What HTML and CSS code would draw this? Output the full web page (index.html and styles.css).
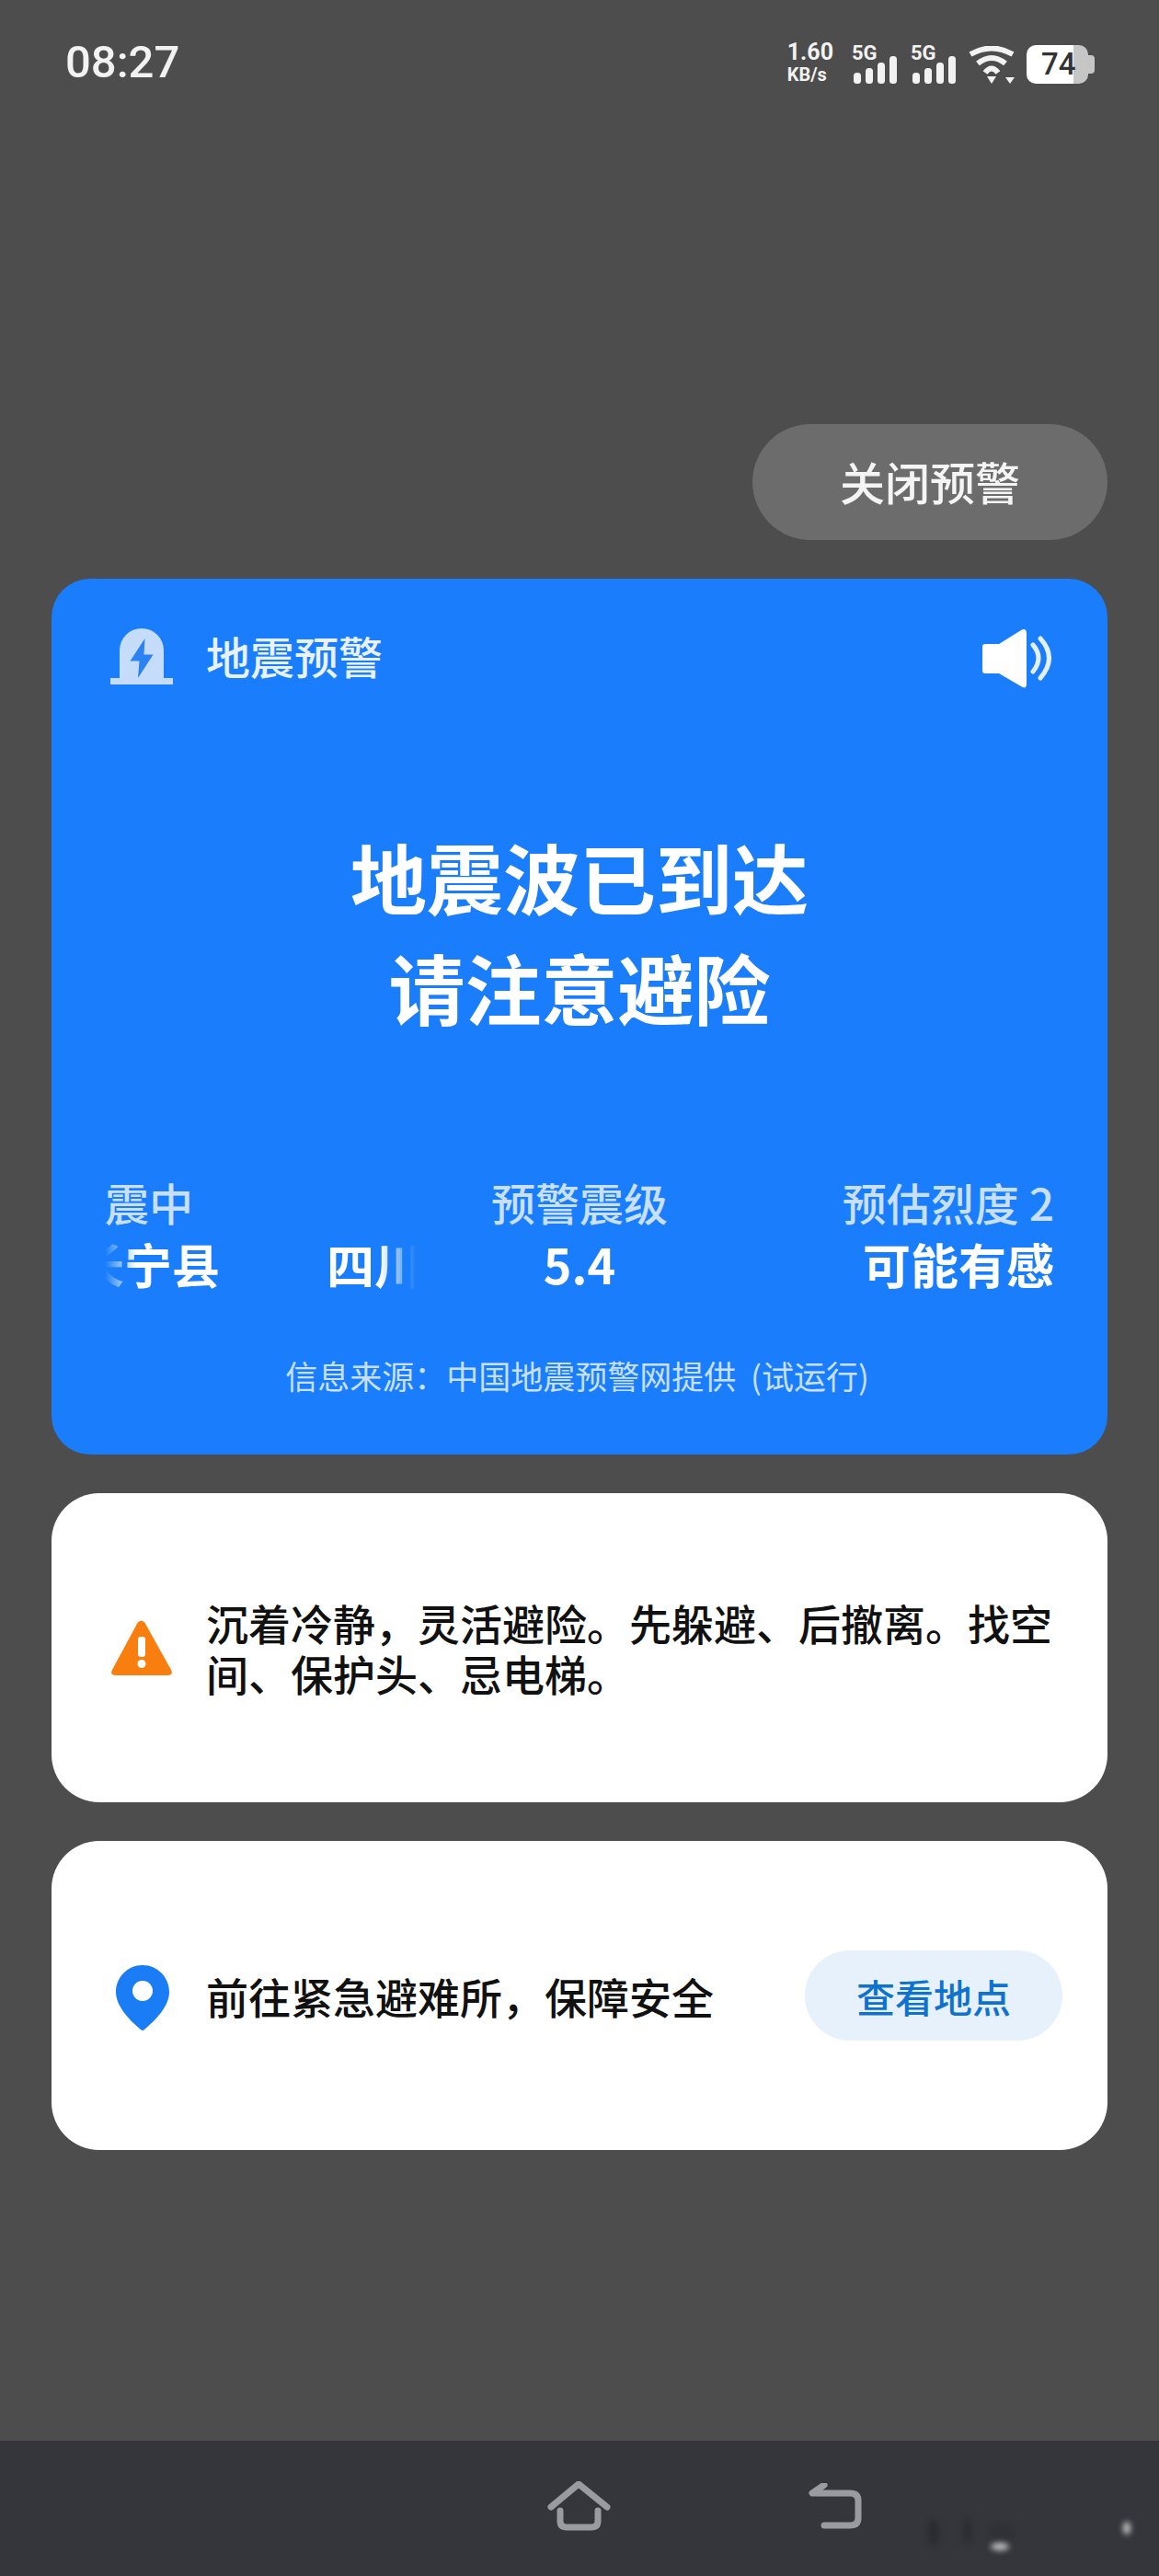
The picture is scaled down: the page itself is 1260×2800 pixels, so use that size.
FILE: index.html
```html
<!DOCTYPE html>
<html lang="zh-CN">
<head>
    <meta charset="UTF-8">
    <meta name="viewport" content="width=device-width, initial-scale=1.0">
    <title>地震预警</title>
    <link rel="stylesheet" href="styles.css">
</head>
<body>
    <div class="status-bar">
        <span class="time">08:27</span>
        <div class="status-icons">
            <div class="net-speed">
                <span class="speed-value">1.60</span>
                <span class="speed-unit">KB/s</span>
            </div>
            <div class="signal">
                <span class="signal-label">5G</span>
                <svg class="signal-bars" viewBox="0 0 48 30" width="48" height="30">
                    <rect x="0" y="18" width="8" height="12" rx="3.5"/>
                    <rect x="13" y="13" width="8" height="17" rx="3.5"/>
                    <rect x="26" y="7" width="8" height="23" rx="3.5"/>
                    <rect x="39" y="0" width="8" height="30" rx="3.5"/>
                </svg>
            </div>
            <div class="signal">
                <span class="signal-label">5G</span>
                <svg class="signal-bars" viewBox="0 0 48 30" width="48" height="30">
                    <rect x="0" y="18" width="8" height="12" rx="3.5"/>
                    <rect x="13" y="13" width="8" height="17" rx="3.5"/>
                    <rect x="26" y="7" width="8" height="23" rx="3.5"/>
                    <rect x="39" y="0" width="8" height="30" rx="3.5"/>
                </svg>
            </div>
            <svg class="wifi" viewBox="0 0 50 41" width="50" height="41">
                <path d="M2 9Q25 -4 48 9M10 19Q25 7 40 19M18 29Q25 20 32 29" fill="none" stroke="#f2f2f2" stroke-width="6"/>
                <path d="M20 33H30L25 41ZM40 34H50L45 41Z" fill="#f2f2f2"/>
            </svg>
            <div class="battery">
                <div class="battery-body"><span class="battery-level">74</span></div>
                <div class="battery-nub"></div>
            </div>
        </div>
    </div>

    <main class="content">
        <button class="close-alert">关闭预警</button>

        <section class="alert-card">
            <div class="alert-header">
                <svg class="alert-icon" viewBox="0 0 68 62" width="68" height="62">
                    <path d="M10 55V24a24 24 0 0 1 48 0V55Z" fill="#c6dcfb"/>
                    <rect x="0" y="54" width="68" height="7" fill="#c6dcfb"/>
                    <path d="M37.5 11L21.5 35.5H31.5L30 54L46.5 28.5H36.5Z" fill="#2a82f4"/>
                </svg>
                <span class="alert-name">地震预警</span>
                <svg class="sound-icon" viewBox="0 0 76 70" width="76" height="70">
                    <path d="M3 18H18L42 3Q48 0 48 7V61Q48 68 42 64L18 50H3Q0 50 0 47V21Q0 18 3 18Z" fill="#fff"/>
                    <path d="M55 19Q67 33 55 48M63 12Q82 33 63 55" fill="none" stroke="#e4f0ff" stroke-width="5" stroke-linecap="round"/>
                </svg>
            </div>

            <h1 class="alert-title">地震波已到达<br>请注意避险</h1>

            <div class="alert-stats">
                <div class="stat">
                    <div class="stat-label">震中</div>
                    <div class="stat-scroll"><span class="stat-scroll-text">长宁县<span class="stat-scroll-gap"></span>四川</span></div>
                </div>
                <div class="stat stat-center">
                    <div class="stat-label">预警震级</div>
                    <div class="stat-value">5.4</div>
                </div>
                <div class="stat stat-right">
                    <div class="stat-label">预估烈度 2</div>
                    <div class="stat-value">可能有感</div>
                </div>
            </div>

            <p class="alert-source">信息来源：中国地震预警网提供 (试运行)</p>
        </section>

        <section class="tip-card">
            <svg class="tip-icon" viewBox="0 0 68 62" width="68" height="62">
                <path d="M29.5 4Q33.5 -1 37.5 4L66 55Q69 61 62 61H6Q-1 61 2 55Z" fill="#f97e10"/>
                <rect x="30" y="19" width="8" height="22" rx="3" fill="#fff"/>
                <circle cx="34" cy="48.5" r="4.5" fill="#fff"/>
            </svg>
            <p class="tip-text">沉着冷静，灵活避险。先躲避、后撤离。找空间、保护头、忌电梯。</p>
        </section>

        <section class="tip-card">
            <svg class="pin-icon" viewBox="0 0 58 72" width="58" height="72">
                <path d="M29 0C13 0 0 13 0 29C0 45 15 60 27 70Q29 72 31 70C43 60 58 45 58 29C58 13 45 0 29 0Z" fill="#1a7df5"/>
                <circle cx="29" cy="28" r="11" fill="#fff"/>
            </svg>
            <p class="tip-text tip-text-grow">前往紧急避难所，保障安全</p>
            <button class="view-place">查看地点</button>
        </section>
    </main>

    <nav class="nav-bar">
        <svg class="nav-home" viewBox="0 0 72 56" width="72" height="56">
            <path d="M5 28L35 3L66 28M15 32V43Q15 50 22 50H49Q56 50 56 43V32" fill="none" stroke="#9a9ba0" stroke-width="7" stroke-linecap="round" stroke-linejoin="round"/>
        </svg>
        <svg class="nav-back" viewBox="0 0 62 54" width="62" height="54">
            <path d="M18 2L5 11H46Q55 11 55 19V38Q55 46 46 46H18" fill="none" stroke="#9a9ba0" stroke-width="7" stroke-linecap="round" stroke-linejoin="round"/>
        </svg>
        <svg class="nav-smudge" viewBox="0 0 240 60" width="240" height="60">
            <ellipse cx="15" cy="32" rx="6" ry="15" fill="#2a2b2f"/>
            <ellipse cx="52" cy="30" rx="6" ry="15" fill="#2d2e32"/>
            <ellipse cx="90" cy="34" rx="14" ry="13" fill="#303136"/>
            <ellipse cx="87" cy="47" rx="10" ry="4" fill="#c8c8c8"/>
            <ellipse cx="225" cy="27" rx="4" ry="7" fill="#c8c8c8"/>
        </svg>
    </nav>
</body>
</html>
```

FILE: styles.css
```css
* {
    box-sizing: border-box;
}

body {
    margin: 0;
    height: 2800px;
    display: flex;
    flex-direction: column;
    background: #4d4d4d;
    font-family: "Noto Sans CJK SC", "Noto Sans", sans-serif;
    overflow: hidden;
}

.status-bar {
    display: flex;
    justify-content: space-between;
    align-items: center;
    height: 134px;
    padding: 0 70px 0 71px;
    color: #f2f2f2;
    font-family: Roboto, sans-serif;
}

.time {
    font-size: 49px;
    font-weight: 500;
}

.status-icons {
    display: flex;
    align-items: flex-end;
    gap: 13px;
}

.net-speed {
    display: flex;
    flex-direction: column;
    font-weight: 700;
    line-height: 1;
    margin-right: 9px;
}

.speed-value {
    font-size: 25px;
}

.speed-unit {
    font-size: 20px;
    margin-top: 2px;
}

.signal {
    display: flex;
    flex-direction: column;
    align-items: flex-start;
    height: 42px;
    position: relative;
    width: 48px;
}

.signal + .signal {
    margin-left: 3px;
}

.signal-label {
    font-size: 22px;
    font-weight: 700;
    line-height: 18px;
    position: absolute;
    top: 0;
    left: -2px;
}

.signal-bars {
    fill: #f2f2f2;
    margin-top: 12px;
}

.wifi {
    display: block;
}

.battery {
    display: flex;
    align-items: center;
}

.battery-body {
    width: 67px;
    height: 42px;
    border-radius: 10px;
    background: linear-gradient(to right, #fff 76%, #c6c6c6 76%);
    display: flex;
    align-items: center;
    padding-left: 16px;
}

.battery-level {
    font-size: 33px;
    font-weight: 500;
    color: #333;
}

.battery-nub {
    width: 7px;
    height: 20px;
    background: #c6c6c6;
    border-radius: 0 4px 4px 0;
}

.content {
    flex: 1;
    display: flex;
    flex-direction: column;
    padding: 327px 56px 0;
}

.close-alert {
    align-self: flex-end;
    width: 386px;
    height: 126px;
    border: none;
    border-radius: 63px;
    background: #6c6c6c;
    color: #f4f4f4;
    font-family: inherit;
    font-size: 49px;
    font-weight: 500;
    padding: 0 0 4px;
}

.alert-card {
    margin-top: 42px;
    height: 952px;
    background: #1a7dfb;
    border-radius: 42px;
    color: #fff;
    padding: 50px 58px 0;
    display: flex;
    flex-direction: column;
}

.alert-header {
    display: flex;
    align-items: center;
    height: 70px;
}

.alert-icon {
    margin-left: 6px;
}

.alert-name {
    flex: 1;
    margin-left: 36px;
    font-size: 48px;
    font-weight: 500;
    color: #e8f2ff;
    position: relative;
    top: -2px;
}

.sound-icon {
    margin-right: 2px;
    margin-top: 5px;
}

.alert-title {
    margin: 143px 0 0;
    text-align: center;
    font-size: 83px;
    font-weight: 700;
    line-height: 120px;
}

.alert-stats {
    margin-top: 140px;
    display: grid;
    grid-template-columns: 1fr auto 1fr;
}

.stat-center {
    text-align: center;
}

.stat-right {
    text-align: right;
}

.stat-label {
    font-size: 48px;
    font-weight: 500;
    line-height: 68px;
    color: #c8e0fd;
}

.stat-value,
.stat-scroll {
    font-size: 52px;
    font-weight: 700;
    line-height: 68px;
}

.stat-scroll {
    width: 338px;
    overflow: hidden;
    white-space: nowrap;
    -webkit-mask-image: linear-gradient(to right, transparent 0, #000 34px, #000 300px, transparent 338px);
    mask-image: linear-gradient(to right, transparent 0, #000 34px, #000 300px, transparent 338px);
}

.stat-scroll-text {
    display: inline-block;
    margin-left: -31px;
}

.stat-scroll-gap {
    display: inline-block;
    width: 116px;
}

.alert-source {
    margin: 62px 0 0;
    padding-right: 5px;
    text-align: center;
    font-size: 35px;
    word-spacing: 8px;
    line-height: 50px;
    color: #c8e0fd;
}

.tip-card {
    margin-top: 42px;
    height: 336px;
    background: #fff;
    border-radius: 52px;
    display: flex;
    align-items: center;
    padding: 0 48px 0 64px;
}

.tip-icon {
    flex: none;
}

.pin-icon {
    flex: none;
    margin-left: 6px;
    margin-right: 4px;
    margin-top: 5px;
}

.tip-text {
    margin: 0 0 0 36px;
    font-size: 46px;
    font-weight: 500;
    line-height: 55px;
    color: #111;
}

.tip-text-grow {
    flex: 1;
}

.view-place {
    width: 280px;
    height: 98px;
    border: none;
    border-radius: 49px;
    background: #e6f1fc;
    color: #0f72cf;
    font-family: inherit;
    font-size: 42px;
    font-weight: 500;
    margin-right: 1px;
}

.nav-bar {
    height: 147px;
    background: #35363b;
    position: relative;
    display: flex;
    align-items: flex-start;
    padding: 44px 0 0 594px;
}

.nav-back {
    margin-left: 212px;
    margin-top: 2px;
}

/* leftover of the blurred-out watermark */
.nav-smudge {
    position: absolute;
    left: 1000px;
    top: 68px;
    filter: blur(3px);
}
```
